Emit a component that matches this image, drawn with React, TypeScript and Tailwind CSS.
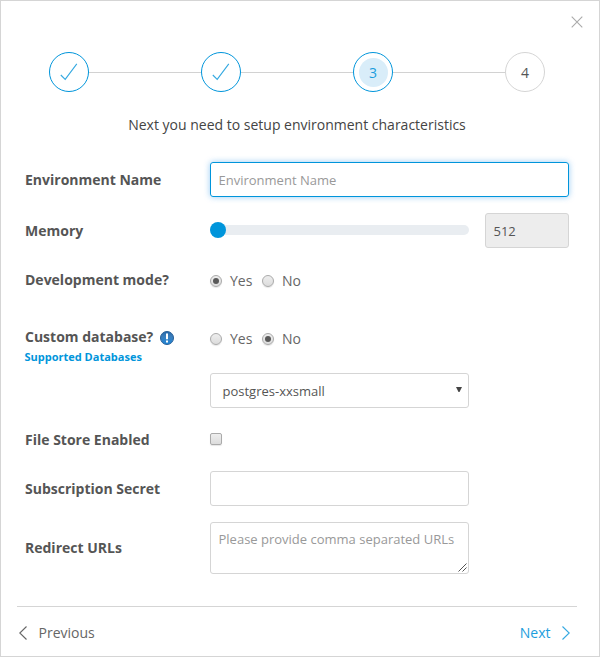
import type { ReactNode } from "react";

function Check() {
  return (
    <svg width="18" height="18" viewBox="0 0 18 18" fill="none" stroke="#35a9e1" strokeWidth="1.1">
      <path d="M.8 12 L5.2 16.4 L16.8 .8" />
    </svg>
  );
}

function Line() {
  return <div className="h-px w-[112px] bg-[#d2d2d2]" />;
}

function DoneStep() {
  return (
    <div className="flex size-10 items-center justify-center rounded-full border border-[#0095db]">
      <Check />
    </div>
  );
}

function Label({ children, className = "" }: { children: ReactNode; className?: string }) {
  return (
    <div className={"w-[185px] shrink-0 text-[14px] leading-5 font-bold " + className}>{children}</div>
  );
}

function Radio({ checked }: { checked?: boolean }) {
  return (
    <span className="flex size-3 shrink-0 items-center justify-center rounded-full border border-[#aaa] bg-gradient-to-b from-[#eee] to-[#dcdcdc] shadow-[0_1px_1px_rgba(0,0,0,0.1)]">
      {checked && <span className="size-1.5 rounded-full bg-[#595959]" />}
    </span>
  );
}

function YesNo({ value }: { value: "yes" | "no" }) {
  return (
    <div className="flex h-5 items-center text-[14px] leading-5 text-[#666]">
      <Radio checked={value === "yes"} />
      <span className="w-10 pl-2">Yes</span>
      <Radio checked={value === "no"} />
      <span className="pl-2">No</span>
    </div>
  );
}

function InfoIcon() {
  return (
    <svg width="14" height="14" viewBox="0 0 14 14" className="mt-1">
      <defs>
        <linearGradient id="info" x1="0" y1="0" x2="0" y2="1">
          <stop offset="0" stopColor="#2468aa" />
          <stop offset="0.4" stopColor="#3c7fbd" />
          <stop offset="1" stopColor="#1d86d8" />
        </linearGradient>
      </defs>
      <circle cx="7" cy="7" r="6.5" fill="url(#info)" stroke="#285e96" />
      <path d="M6 2.6h2v5.6H6zM6 9.4h2v2H6z" fill="#fff" />
    </svg>
  );
}

export default function App() {
  return (
    <div className="flex h-[657px] w-[600px] flex-col border border-[#d5d5d5] bg-white font-['Open_Sans','Noto_Sans',sans-serif] text-[#555]">
      <header className="flex h-[51px] justify-end pt-[15px] pr-4">
        <svg width="12" height="12" viewBox="0 0 12 12" fill="none" stroke="#aaa" strokeWidth="1.1">
          <path d="M.7.7l10.6 10.6M11.3.7L.7 11.3" />
        </svg>
      </header>
      <nav className="flex h-10 items-center pl-12 text-[14px]">
        <DoneStep />
        <Line />
        <DoneStep />
        <Line />
        <div className="flex size-10 items-center justify-center rounded-full border border-[#0095db]">
          <div className="flex size-[29px] items-center justify-center rounded-full bg-[#d9edf9] text-[#1c9ddd]">3</div>
        </div>
        <Line />
        <div className="flex size-10 items-center justify-center rounded-full border border-[#d5d5d5]">4</div>
      </nav>
      <h1 className="mt-[23px] h-5 pr-1.5 text-center text-[14px] leading-5 text-[#444]">
        Next you need to setup environment characteristics
      </h1>
      <main className="mt-[27px] flex flex-col pl-6">
        <div className="flex h-[35px] items-center">
          <Label>Environment Name</Label>
          <input
            placeholder="Environment Name"
            className="h-[35px] w-[359px] rounded-[3px] border border-[#0095db] px-[7.5px] text-[13px] shadow-[0_0_6px_rgba(0,130,230,0.4)] outline-none placeholder:text-[#999]"
          />
        </div>
        <div className="mt-4 flex h-[35px] items-center">
          <Label>Memory</Label>
          <div className="mb-px flex h-4 w-[259px] items-center">
            <div className="z-10 size-4 shrink-0 rounded-full bg-[#0095db]" />
            <div className="-ml-4 h-2.5 grow rounded-full bg-[#e9edf1]" />
          </div>
          <div className="ml-4 flex h-[35px] w-[84px] items-center rounded-[3px] border border-[#d5d5d5] bg-[#ededed] px-[7.5px] pt-0.5 text-[13px]">
            512
          </div>
        </div>
        <div className="mt-[23px] flex h-5">
          <Label className="-mt-px">Development mode?</Label>
          <YesNo value="yes" />
        </div>
        <div className="mt-9 flex h-[46px]">
          <div className="w-[185px]">
            <div className="flex text-[14px] leading-5 font-bold">
              <span className="w-[135px]">Custom database?</span>
              <InfoIcon />
            </div>
            <div className="-ml-[0.5px] text-[11px] leading-5 font-bold text-[#0095db]">Supported Databases</div>
          </div>
          <div className="pt-0.5">
            <YesNo value="no" />
          </div>
        </div>
        <div className="ml-[185px] flex h-[35px] w-[259px] items-center justify-between rounded-[3px] border border-[#d5d5d5] pt-0.5 pr-[5px] pl-[11.5px] text-[13px]">
          postgres-xxsmall
          <svg width="8" height="7" viewBox="0 0 8 7" className="mb-1" fill="#444">
            <path d="M1 1h6L4.5 6h-1z" />
          </svg>
        </div>
        <div className="mt-[21px] flex h-5 items-center">
          <Label className="pt-0.5">File Store Enabled</Label>
          <span className="size-3 rounded-[2px] border border-[#aaa] bg-gradient-to-b from-[#eee] to-[#dcdcdc] shadow-[0_1px_1px_rgba(0,0,0,0.1)]" />
        </div>
        <div className="mt-[22px] flex h-[35px] items-center">
          <Label>Subscription Secret</Label>
          <input className="h-[35px] w-[259px] rounded-[3px] border border-[#d5d5d5] px-2 text-[13px] outline-none" />
        </div>
        <div className="mt-4 flex h-[52px] items-center">
          <Label>Redirect URLs</Label>
          <div className="flex h-[52px] w-[259px] flex-col items-end justify-between rounded-[3px] border border-[#d5d5d5] pt-1.5 pr-px pb-px">
            <p className="w-full pl-[7.5px] text-[13px] leading-5 whitespace-nowrap text-[#999]">Please provide comma separated URLs</p>
            <svg width="9" height="9" viewBox="0 0 9 9" fill="none" stroke="#555">
              <path d="M.5 8.5l8-8M4.5 8.5l4-4" />
            </svg>
          </div>
        </div>
      </main>
      <footer className="mx-4 mt-8 flex h-[50px] w-[560px] items-center justify-between border-t border-[#d5d5d5] pt-[3px] text-[14px]">
        <button className="flex items-center gap-[11.5px] pl-0.5 text-[#666]">
          <svg width="8" height="14" viewBox="0 0 8 14" fill="none" stroke="#666" strokeWidth="1.1">
            <path d="M7.5.5L.8 7l6.7 6.5" />
          </svg>
          <span className="-mt-0.5">Previous</span>
        </button>
        <button className="flex items-center gap-[11.5px] pr-[7px] text-[#1c9ddd]">
          <span className="-mt-0.5">Next</span>
          <svg width="8" height="14" viewBox="0 0 8 14" fill="none" stroke="#35a9e1" strokeWidth="1.1">
            <path d="M.5.5L7.2 7 .5 13.5" />
          </svg>
        </button>
      </footer>
    </div>
  );
}
